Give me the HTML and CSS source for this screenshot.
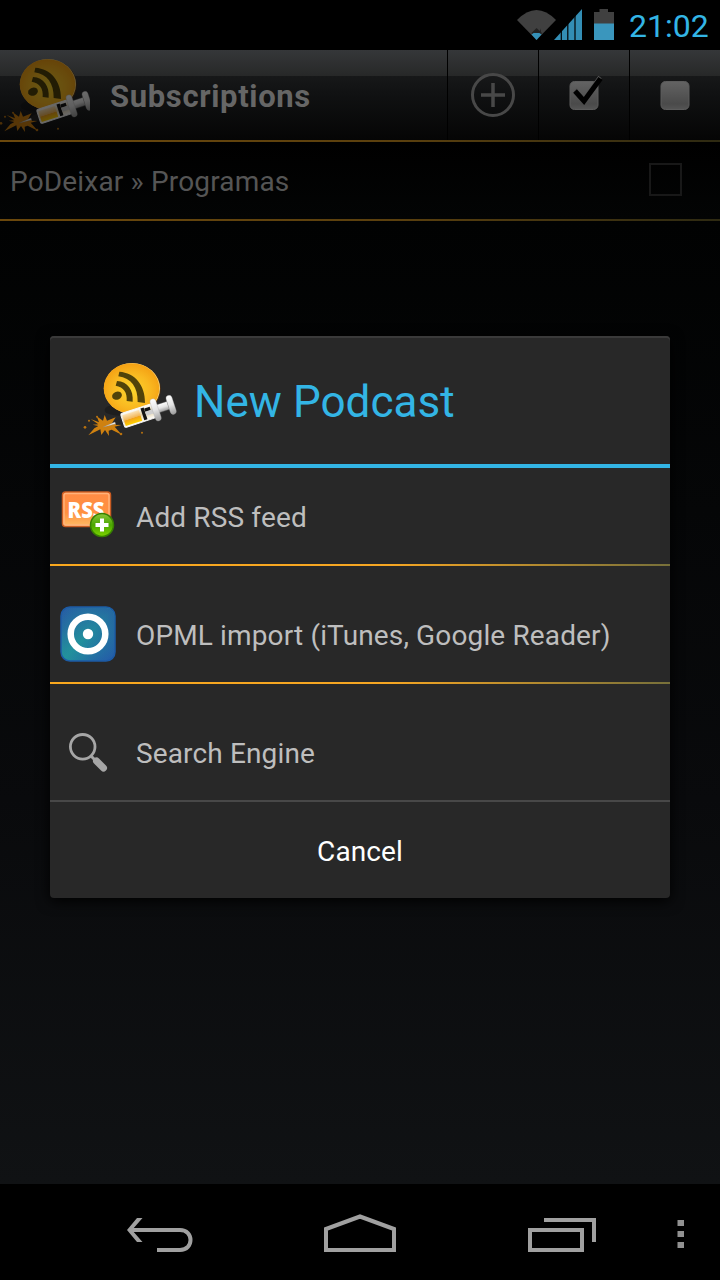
FILE: index.html
```html
<!DOCTYPE html>
<html lang="en">
<head>
<meta charset="utf-8">
<title>Subscriptions</title>
<link rel="stylesheet" href="styles.css">
</head>
<body>
<svg class="defs" width="0" height="0">
  <defs>
    <radialGradient id="ball" cx=".5" cy=".55" r=".6"><stop offset="0" stop-color="#fbd72c"/><stop offset=".55" stop-color="#f9b921"/><stop offset="1" stop-color="#f39a10"/></radialGradient>
    <linearGradient id="metal" x1="0" y1="0" x2="0" y2="1"><stop offset="0" stop-color="#fff"/><stop offset=".5" stop-color="#e4e4e4"/><stop offset="1" stop-color="#9b9b9b"/></linearGradient>
    <linearGradient id="barrel" x1="0" y1="0" x2="0" y2="1"><stop offset="0" stop-color="#fff"/><stop offset=".5" stop-color="#e3d2a8"/><stop offset="1" stop-color="#fff"/></linearGradient>
    <linearGradient id="juice" x1="0" y1="0" x2="0" y2="1"><stop offset="0" stop-color="#fbe3b8"/><stop offset=".5" stop-color="#f2b75a"/><stop offset=".55" stop-color="#f2a41a"/><stop offset="1" stop-color="#ffd000"/></linearGradient>
    <symbol id="logo" viewBox="36 30 300 240">
      <ellipse cx="150" cy="180" rx="46" ry="17" fill="#111" opacity=".45"/>
      <ellipse cx="188" cy="117" rx="84" ry="76" fill="#5b330a"/>
      <ellipse cx="186" cy="115" rx="84" ry="76" fill="#ffe18a"/>
      <ellipse cx="184.500" cy="115" rx="83.500" ry="75.500" fill="url(#ball)"/>
      <g fill="#51430a"><path d="M148 65C194 68 226 105 225 159L203 156C204 113 184 84 145 79Z"/><path d="M141 93C173 95 191 120 188 155L170 153C172 127 161 111 137 107Z"/><ellipse cx="141" cy="137" rx="15" ry="12" transform="rotate(-20 141 137)"/></g>
      <path d="M62 207L87 217L80 199L99 212L104 195L111 212L137 202L126 220L154 225L134 230L155 254L125 239L116 242L117 258L105 240L94 255L91 238L55 256L73 235L85 228L68 224L85 223Z" fill="#cf8110"/>
      <g fill="#b9720f"><circle cx="45" cy="232" r="4"/><circle cx="57" cy="212" r="3"/><circle cx="81" cy="200" r="3"/><circle cx="216" cy="248" r="3"/><circle cx="153" cy="252" r="4"/></g>
      <g transform="translate(-3 2) rotate(-18 103 229)">
        <path d="M103 229L145 225V232Z" fill="#eee" stroke="#888"/>
        <path d="M141 222L163 218V240L141 235Z" fill="#262626"/>
        <path d="M260 215h48v25h-48z" fill="url(#metal)" stroke="#777"/>
        <rect x="164" y="207" width="98" height="44" rx="5" fill="url(#barrel)" stroke="#f8f8f8" stroke-width="3"/>
        <rect x="168" y="213" width="52" height="34" fill="url(#juice)"/>
        <path d="M226 211h10v37h-10zM237 214h17v11h-17z" fill="#141414"/>
        <rect x="236" y="224" width="28" height="13" fill="#cfcfcf"/>
        <rect x="259" y="194" width="18" height="69" rx="9" fill="url(#metal)" stroke="#aaa"/>
        <rect x="308" y="199" width="18" height="59" rx="9" fill="url(#metal)" stroke="#aaa"/>
      </g>
    </symbol>
  </defs>
</svg>
<div class="screen">
  <div class="status">
    <svg width="100" height="36" viewBox="515 7 100 36">
      <path d="M517 20Q536.500 0 556 20L536.500 40Z" fill="#404040"/>
      <path d="M531.500 33L536.500 28L542 33L536.500 40Z" fill="#222"/>
      <path d="M531.500 34.500Q536.500 30 541.500 34.500L536.500 40Z" fill="#3591b8"/>
      <path d="M532 33H541V28.500L539.500 32H533.500Z" fill="#242424"/>
      <path d="M554 40L582 9V40Z" fill="#338eb5"/>
      <path d="M561.300 8V41M567.800 8V41M575 8V41" stroke="#000" stroke-width="1.200"/>
      <path d="M594 12H599.500V9H608V12H614V31H594Z" fill="#404040"/>
      <path d="M594 23.500H614V40H594Z" fill="#3a96bd"/>
    </svg>
    <span class="clock">21:02</span>
  </div>
  <header class="bar">
    <div class="bar-logo"><svg width="100" height="80"><use href="#logo"/></svg></div>
    <h1 class="bar-title">Subscriptions</h1>
    <div class="action"><svg width="48" height="48" viewBox="0 0 48 48" fill="none"><circle cx="24" cy="24" r="20.500" stroke="#484848" stroke-width="3"/><path d="M24 12V36M12 24H36" stroke="#484848" stroke-width="3.500"/></svg></div>
    <div class="action"><svg width="48" height="48" viewBox="0 0 48 48"><defs><linearGradient id="key" x1="0" y1="0" x2="0" y2="1"><stop offset="0" stop-color="#636363"/><stop offset=".8" stop-color="#4a4a4a"/><stop offset="1" stop-color="#555"/></linearGradient></defs><rect class="key" x="10" y="10.500" width="28" height="28" rx="4.500"/><path d="M15 18.500L24 28.500L40 6" fill="none" stroke="#555" stroke-width="4"/><path d="M15 20L24 30L40.500 7.500" fill="none" stroke="#000" stroke-width="5"/></svg></div>
    <div class="action"><svg width="48" height="48" viewBox="0 0 48 48"><rect class="key" x="10" y="10.500" width="28" height="28" rx="4.500"/></svg></div>
  </header>
  <div class="rule"></div>
  <div class="feed"><span class="feed-name">PoDeixar » Programas</span><span class="box"></span></div>
  <div class="rule"></div>
  <main class="space"></main>
  <nav class="nav">
    <svg width="720" height="96" viewBox="0 1184 720 96" fill="none" stroke="#a0a0a0" stroke-width="4">
      <path d="M157 1250H180C194 1250 194 1230 180 1230H130"/>
      <path d="M137 1218H142.500L132 1230L142.500 1242H137L127 1230Z" fill="#a0a0a0" stroke="none"/>
      <path d="M326 1250V1229L360 1216.500L394 1229V1250Z"/>
      <path d="M530 1230H582V1250H530ZM544 1220H594V1242"/>
      <path d="M677.500 1223H684M677.500 1234H684M677.500 1245H684" stroke="#919191" stroke-width="6"/>
    </svg>
  </nav>
  <section class="dialog">
    <div class="dialog-head"><svg width="100" height="80"><use href="#logo"/></svg><h2 class="dialog-title">New Podcast</h2></div>
    <div class="item first">
      <svg width="56" height="56" viewBox="60 488 56 56">
        <defs><linearGradient id="rss" x1="0" y1="0" x2="0" y2="1"><stop offset="0" stop-color="#ff8c46"/><stop offset=".6" stop-color="#ff9040"/><stop offset="1" stop-color="#ffbd65"/></linearGradient><linearGradient id="green" x1="0" y1="0" x2="0" y2="1"><stop offset="0" stop-color="#8ac63c"/><stop offset=".5" stop-color="#4ba600"/><stop offset="1" stop-color="#7dd400"/></linearGradient></defs>
        <rect x="62.500" y="492" width="48" height="34.500" rx="3" fill="url(#rss)" stroke="#ca5c22" stroke-width="1.500"/>
        <rect x="64" y="493.500" width="45" height="31.500" rx="2" fill="none" stroke="#ffb27b" stroke-width="1.500"/>
        <text class="rss-text" x="67.500" y="518" textLength="37" lengthAdjust="spacingAndGlyphs">RSS</text>
        <circle cx="102" cy="525" r="11.500" fill="url(#green)" stroke="#378000" stroke-width="1.500"/>
        <path d="M102 518.500V531.500M95.500 525H108.500" stroke="#fff" stroke-width="4"/>
      </svg>
      <span>Add RSS feed</span>
    </div>
    <div class="rule bright"></div>
    <div class="item">
      <svg width="56" height="56" viewBox="0 0 56 56">
        <defs><linearGradient id="opml" x1="0" y1="0" x2="1" y2="1"><stop offset="0" stop-color="#2853a5"/><stop offset=".5" stop-color="#22919c"/><stop offset="1" stop-color="#2451ab"/></linearGradient><linearGradient id="opml-b" x1="0" y1="1" x2="1" y2="0"><stop offset="0" stop-color="#24959a" stop-opacity=".5"/><stop offset=".3" stop-color="#2386a0" stop-opacity="0"/><stop offset="1" stop-color="#284ea4" stop-opacity=".7"/></linearGradient></defs>
        <rect x="1" y="1" width="54" height="54" rx="9" fill="url(#opml)" stroke="#1c5ba5" stroke-width="1.500"/><rect x="2" y="2" width="52" height="52" rx="8" fill="url(#opml-b)"/>
        <circle cx="28" cy="28" r="17.300" fill="none" stroke="#fff" stroke-width="6.500"/><circle cx="28" cy="28" r="5.200" fill="#fff"/>
      </svg>
      <span>OPML import (iTunes, Google Reader)</span>
    </div>
    <div class="rule bright"></div>
    <div class="item">
      <svg width="56" height="56" viewBox="60 724 56 56" fill="none">
        <circle cx="82.700" cy="746.800" r="12.300" stroke="#a6a6a6" stroke-width="2.800"/><path d="M91 756L96 761" stroke="#a6a6a6" stroke-width="3"/><path d="M96.500 761L103.500 768" stroke="#a6a6a6" stroke-width="7" stroke-linecap="round"/>
      </svg>
      <span>Search Engine</span>
    </div>
    <div class="cancel">Cancel</div>
  </section>
</div>
</body>
</html>
```
FILE: styles.css
```css
body { margin: 0; background: #000; font-family: Roboto, "Noto Sans", sans-serif; }
.defs { position: absolute; }
.screen { position: relative; width: 720px; height: 1280px; display: flex; flex-direction: column; overflow: hidden; background: #000; }
.status { height: 50px; box-sizing: border-box; display: flex; align-items: center; justify-content: flex-end; padding-right: 11px; gap: 14px; }
.clock { font-size: 32px; color: #33b5e5; width: 80px; white-space: nowrap; line-height: 52px; padding-top: 2px; }
.bar { height: 90px; display: flex; align-items: center; background: linear-gradient(#353739 0, #272828 26px, #171819 26px, #101112 45px, #050505 90px); }
.bar-logo { width: 90px; height: 80px; overflow: hidden; margin-top: 2px; filter: brightness(.42); flex: none; }
.bar-logo svg { display: block; margin-left: -2px; }
.bar-title { margin: 2px 0 0 20px; flex: 1; font-size: 31px; font-weight: 700; color: #666; white-space: nowrap; letter-spacing: .65px; }
.action { width: 90px; height: 90px; border-left: 1px solid #000; display: flex; align-items: center; justify-content: center; }
.key { fill: url(#key); stroke: #5c5c5c; stroke-width: 1; }
.rule { height: 2px; flex: none; background: linear-gradient(90deg, #6b480c, #5b400e 55%, #2e2a12); }
.rule.bright { background: linear-gradient(90deg, #f9a81e, #f5a623 55%, #77703a); }
.feed { height: 77px; display: flex; align-items: center; justify-content: space-between; padding: 0 37px 0 10px; background: linear-gradient(#000, #030404); color: #555; font-size: 28px; }
.feed-name { padding-top: 2px; letter-spacing: .17px; }
.box { width: 29px; height: 29px; border: 2px solid #181818; margin: -2px 1px 0 0; }
.space { flex: 1; background: linear-gradient(#010202, #090a0c 60%, #101214); }
.nav { height: 96px; background: #000; }
.nav svg { display: block; }
.dialog { position: absolute; left: 50px; top: 336px; width: 620px; height: 562px; background: #282828; border-radius: 4px; box-shadow: inset 0 2px 0 #3a3a3a, 0 3px 14px #000; color: #bebebe; font-size: 28px; }
.dialog-head { height: 128px; border-bottom: 4px solid #33b5e5; display: flex; align-items: center; padding-left: 32px; gap: 12px; }
.dialog-title { margin: 4px 0 0; font-size: 44px; font-weight: 400; color: #33b5e5; white-space: nowrap; letter-spacing: .05px; }
.item { height: 116px; box-sizing: border-box; padding: 20px 10px 0; display: flex; align-items: center; gap: 20px; white-space: nowrap; letter-spacing: .14px; }
.item.first { height: 96px; padding-top: 0; }
.item span { padding-top: 2px; }
.rss-text { font: 800 23px "Open Sans", sans-serif; fill: #fff; }
.cancel { height: 96px; border-top: 2px solid #484848; color: #fff; text-align: center; line-height: 99px; letter-spacing: .1px; }
```
